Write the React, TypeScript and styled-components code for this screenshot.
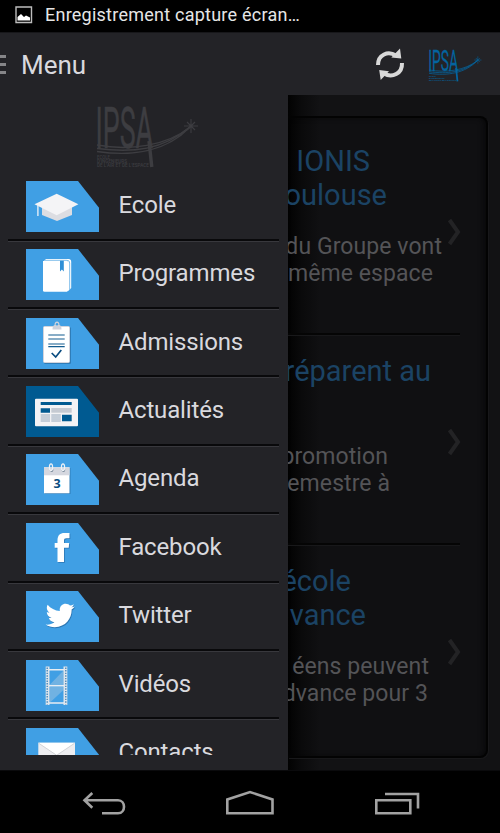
import React from 'react';
import styled, {createGlobalStyle} from 'styled-components';
import {FaTwitter} from 'react-icons/fa';

const colors = {
  panel: '#232327',
  text: '#d9d9de',
  blue: '#409fe4',
  blueDark: '#005a91',
  navy: '#0a4c80',
};

const GlobalStyle = createGlobalStyle`
  * {
    box-sizing: border-box;
  }
  body {
    margin: 0;
    background: #000;
    font-family: Roboto, 'Liberation Sans', sans-serif;
  }
  svg {
    display: block;
    flex: none;
    overflow: visible;
  }
`;

const Screen = styled.div`
  width: 500px;
  height: 833px;
  display: flex;
  flex-direction: column;
  overflow: hidden;
  background: #000;
`;

const StatusBar = styled.div`
  height: 32px;
  flex: none;
  display: flex;
  align-items: center;
  gap: 12px;
  padding: 0 0 2px 15px;
  color: #e6e6e6;
  font-size: 18px;
  line-height: 22px;
  letter-spacing: 0.24px;
  white-space: nowrap;
`;

const ActionBar = styled.header`
  height: 63px;
  flex: none;
  display: flex;
  align-items: center;
  padding-right: 18px;
  background: ${colors.panel};
  border-top: 1px solid #17171a;
`;

const ActionTitle = styled.h1`
  flex: 1;
  margin: 2px 0 0 15px;
  color: ${colors.text};
  font-size: 26px;
  line-height: 30px;
  font-weight: 400;
`;

const HeaderLogo = styled.div`
  margin-left: 24px;
  padding-top: 3px;
`;

const Body = styled.div`
  flex: 1;
  min-height: 0;
  display: flex;
`;

const Drawer = styled.nav`
  width: 288px;
  flex: none;
  padding-bottom: 15px;
  background: ${colors.panel};
`;

const DrawerScroll = styled.div`
  height: 660px;
  overflow: hidden;
  padding: 0 9px 0 8px;
`;

const DrawerLogo = styled.div`
  height: 78.2px;
  padding: 10px 0 0 89px;
`;

const MenuRow = styled.div`
  height: 68.4px;
  display: flex;
  align-items: flex-start;
  padding: 7.6px 0 0 18px;
  border-bottom: 1px solid #38383d;
  box-shadow: inset 0 -2px 0 #09090b;
`;

const MenuLabel = styled.span`
  margin: 10px 0 0 18.5px;
  color: ${colors.text};
  font-size: 24px;
  line-height: 28px;
  letter-spacing: -0.15px;
  white-space: nowrap;
`;

const Content = styled.main`
  flex: 1;
  min-width: 0;
  overflow: hidden;
  padding: 21px 12px 12px 0;
  background: linear-gradient(90deg, #020202 0, #0b0b0c 14px, #121214 32px);
`;

const Card = styled.div`
  height: 100%;
  padding-top: 5px;
  border: 2px solid #030303;
  border-left: 0;
  border-radius: 0 8px 8px 0;
  background: linear-gradient(90deg, #020202 0, #0a0a0b 14px, #101012 32px);
  box-shadow: inset -3px 0 6px -2px #060607, 1px 1px 0 #18181a;
`;

const Article = styled.article`
  width: 172px;
  height: 210px;
  display: flex;
  padding-top: 21px;

  & + & {
    border-top: 2px solid #050505;
    box-shadow: inset 0 1px 0 #18181a;
    padding-top: 19px;
  }
`;

const ArticleText = styled.div`
  width: 157px;
  flex: none;
`;

const Title = styled.h2`
  height: 68px;
  margin: 0 0 21px;
  color: #1b4364;
  font-size: 29px;
  line-height: 34px;
  font-weight: 400;
`;

const Excerpt = styled.p`
  margin: 0;
  color: #545457;
  font-size: 23px;
  line-height: 27.4px;
  letter-spacing: 0.08px;
`;

// each line runs on under the drawer, so it is anchored on its right end
const Line = styled.span<{$end: number}>`
  display: flex;
  justify-content: flex-end;
  padding-right: ${({$end}) => $end}px;
  white-space: pre;
`;

const Chevron = styled.svg`
  margin: 73px 0 0 2px;
`;

const NavBar = styled.footer`
  height: 63px;
  flex: none;
  display: grid;
  grid-template-columns: repeat(3, 1fr);
  justify-items: center;
  padding: 18px 30px 0 31px;
  background: #000;
  border-top: 1px solid #0a0a0c;
`;

type LogoProps = {width: number; height: number; color: string};

const IpsaLogo = ({width, height, color}: LogoProps) => (
  <svg width={width} height={height} viewBox="0 0 102 63" fill={color}>
    <text
      x="-1.500"
      y="42.500"
      fontFamily="Roboto"
      fontSize="58"
      textLength="57.500"
      lengthAdjust="spacingAndGlyphs"
      stroke={color}
      strokeWidth=".5"
    >
      IPSA
    </text>
    <g fill="none" stroke={color}>
      <path d="M52 36 54.800 62" strokeWidth="3.400" />
      <path d="M0 40C32 46 70 41 93 22" strokeWidth="1.400" />
      <path d="M0 43.500C36 48 66 45 93 22" strokeWidth="1.400" />
      <path d="M0 46.500C36 52 70 46 93 22" strokeWidth="1.400" />
      <path d="M87 21h14M94 14v14M90 17l8 8M98 17l-8 8" strokeWidth="1.100" />
    </g>
    <g fontFamily="Roboto" fontSize="4.600" fontWeight="500">
      <text x="0" y="53.600" textLength="13" lengthAdjust="spacingAndGlyphs">ECOLE</text>
      <text x="0" y="57.800" textLength="30" lengthAdjust="spacingAndGlyphs">D'INGENIEURS</text>
      <text x="0" y="62" textLength="52" lengthAdjust="spacingAndGlyphs">DE L'AIR ET DE L'ESPACE</text>
    </g>
  </svg>
);

const PictureIcon = () => (
  <svg width="18" height="18" viewBox="0 0 18 18">
    <path d="M1 1h15.500v15.500H1z" fill="none" stroke="#bdbdbd" strokeWidth="1.400" />
    <path d="M2.500 14.500V11l3.500-3 3 3 2-1.500 4 2v3z" fill="#fff" />
  </svg>
);

const DrawerIcon = () => (
  <svg width="6" height="20" viewBox="0 0 6 20" fill="#858588">
    <path d="M0 1h6v3H0zM0 9h6v3H0zM0 17h6v3H0z" />
  </svg>
);

const RefreshIcon = () => (
  <svg width="30" height="34" viewBox="0 0 30 34">
    <g fill="none" stroke="#d8d8d8" strokeWidth="4">
      <path d="M3 18C3 7.500 13 3.500 21 8.500" />
      <path d="M27 16C27.500 26.500 17 31.500 9 26.500" />
    </g>
    <path d="M25 1.500 26.300 11.500 16.300 10.500zM4.200 23l9.800 1.200L5.700 33z" fill="#d8d8d8" />
  </svg>
);

const SchoolArt = () => (
  <>
    <path d="M16 25h30v9L31 40 16 34z" fill="#dcdde2" />
    <path d="M8.500 23.300 30.700 12.700l21.700 10.600-21.700 11z" fill="#f4f4f6" />
    <path d="M11.900 24v11" stroke="#e4eef8" strokeWidth="1.400" />
  </>
);

const BookArt = () => (
  <>
    <path d="M20 10h22.500q2.700 0 2.700 2.700V39l-3 3V12H18z" fill="#fff" />
    <path d="M18.500 11.300h22.500q2.700 0 2.700 2.700v27" fill="none" stroke="#6fb5e8" strokeWidth=".9" />
    <path d="M17 11.900h24q2 0 2 2v26.800l-2 2H18.500q-1.500 0-1.500-1.500z" fill="#fff" />
    <path d="M34 11.700h3.800v10.800l-1.900-2-1.900 2z" fill="#2f8fd6" />
  </>
);

const ClipboardArt = () => (
  <>
    <rect x="18" y="9" width="27" height="37" rx="1.500" fill="#2f7db8" />
    <rect x="17.500" y="8.500" width="26" height="36" rx="1" fill="#fff" stroke="#d3d4dc" />
    <path d="M26.500 11.500q0-4 2-4.500 0-3.500 2.500-3.500T33.500 7q2 .5 2 4.500z" fill="#cfd2dc" />
    <circle cx="31" cy="6.300" r="1.200" fill={colors.blue} />
    <path d="M22.300 17h16.400M22.300 21h16.400M22.300 26h16.400M22.300 28.600h16.400" stroke="#135c90" strokeWidth="1.100" />
    <path d="m25.700 35 4 4 5.600-7" fill="none" stroke={colors.navy} strokeWidth="1.700" />
  </>
);

const NewsArt = () => (
  <>
    <rect x="9" y="12.700" width="43" height="27.600" rx="1" fill="#f3f3f5" />
    <path d="M14.700 16h31v3h-31zM14.700 22.300H24v4.400h-9.300zM36 28.700h9.700v6.600H36z" fill={colors.blueDark} />
    <path d="M25.300 22h20.400v4.700H25.300z" fill="#c5cad2" />
    <path
      d="M14.700 29H24M14.700 31H24M14.700 33H24M14.700 35H24M25.300 29h9.500M25.300 31h9.500M25.300 33h9.500M25.300 35h9.500"
      stroke="#7f96ac"
      strokeWidth=".8"
    />
  </>
);

const CalendarArt = () => (
  <>
    <path d="M18.500 14h26v26h-26z" fill="#2f7db8" />
    <path d="M18 13.300h25.500v26H18z" fill="#fff" />
    <path d="M18 13.300h25.500v8H18z" fill="#d5d7df" />
    <g fill="none" strokeWidth="1.200">
      <path d="M24 16q2 3 3-.5M35.800 16q2 3 3-.5" stroke="#6f8092" />
      <ellipse cx="25" cy="13.300" rx="1.600" ry="3.400" stroke="#eef1f6" />
      <ellipse cx="37" cy="13.300" rx="1.600" ry="3.400" stroke="#eef1f6" />
    </g>
    <text x="31" y="33.700" textAnchor="middle" fontFamily="Open Sans" fontSize="12.500" fontWeight="700" fill={colors.navy}>
      3
    </text>
  </>
);

const FACEBOOK_MARK =
  'M31.500 39V24.800h-2.800V20h2.800v-2.500c0-5.200 2.500-7.500 7-7.500H43.500v5.200H40.500c-2 0-2.500.8-2.500 2.500V20h5.200l-.5 4.800H38V39z';

const FacebookArt = () => (
  <>
    <path d={FACEBOOK_MARK} fill="#2b76b3" transform="translate(.8 .8)" />
    <path d={FACEBOOK_MARK} fill="#fff" />
  </>
);

const TwitterArt = () => (
  <>
    <FaTwitter x="20.300" y="11" size={29} color="#2b76b3" />
    <FaTwitter x="19.600" y="10" size={29} color="#fff" />
  </>
);

const FilmArt = () => (
  <>
    <path d="M37.500 10.500V25h-14zM37.500 27v3L24 42.500V27z" fill="#71b2e2" />
    <path d="M19.700 6.500h3.800v38.500h-3.800zM37.500 6.500h3.800v38.500h-3.800z" fill="#dfe6ec" />
    <path d="M21.200 7.500v37M39.800 7.500v37" stroke="#3f80b5" strokeWidth="1.300" strokeDasharray="1.400 1.200" />
    <path d="M23 9.800h15M23 25.800h15M23 43h15" stroke="#e7edf2" strokeWidth="1.500" />
  </>
);

const MailArt = () => (
  <>
    <path d="M12.300 14.700H49V41H12.300z" fill="#ededf0" />
    <path d="M12.300 14.700H49L30.700 27z" fill="#fff" />
    <path d="m12.800 15.300 17.900 12L48.500 15.300" fill="none" stroke="#cfd0d4" strokeWidth=".9" />
  </>
);

const MENU = [
  {label: 'Ecole', Art: SchoolArt},
  {label: 'Programmes', Art: BookArt},
  {label: 'Admissions', Art: ClipboardArt},
  {label: 'Actualités', Art: NewsArt, active: true},
  {label: 'Agenda', Art: CalendarArt},
  {label: 'Facebook', Art: FacebookArt},
  {label: 'Twitter', Art: TwitterArt},
  {label: 'Vidéos', Art: FilmArt},
  {label: 'Contacts', Art: MailArt},
];

const ARTICLES = [
  {
    title: [['IONIS', 75], ['oulouse', 58]],
    excerpt: [['du Groupe vont', 3], ['même espace', 12]],
  },
  {
    title: [['réparent au', 14]],
    excerpt: [['promotion', 57], ['emestre à', 55]],
  },
  {
    title: [['école', 94], ['vance', 79]],
    excerpt: [['éens peuvent', 16], ['dvance pour 3', 17]],
  },
] as {title: [string, number][]; excerpt: [string, number][]}[];

const renderLines = (lines: [string, number][]) =>
  lines.map(([text, end]) => (
    <Line key={text} $end={end}>
      {text}
    </Line>
  ));

const App = () => (
  <>
    <GlobalStyle />
    <Screen>
      <StatusBar>
        <PictureIcon />
        Enregistrement capture écran…
      </StatusBar>
      <ActionBar>
        <DrawerIcon />
        <ActionTitle>Menu</ActionTitle>
        <RefreshIcon />
        <HeaderLogo>
          <IpsaLogo width={53} height={33} color="#04649f" />
        </HeaderLogo>
      </ActionBar>
      <Body>
        <Drawer>
          <DrawerScroll>
            <DrawerLogo>
              <IpsaLogo width={102} height={63} color="#3d3d41" />
            </DrawerLogo>
            {MENU.map(({label, Art, active}) => (
              <MenuRow key={label}>
                <svg width="74" height="52" viewBox="0 0 74 52">
                  <path d="M0 0h52l21 26.700V51H0z" fill={active ? colors.blueDark : colors.blue} />
                  <Art />
                </svg>
                <MenuLabel>{label}</MenuLabel>
              </MenuRow>
            ))}
          </DrawerScroll>
        </Drawer>
        <Content>
          <Card>
            {ARTICLES.map(({title, excerpt}) => (
              <Article key={title[0][0]}>
                <ArticleText>
                  <Title>{renderLines(title)}</Title>
                  <Excerpt>{renderLines(excerpt)}</Excerpt>
                </ArticleText>
                <Chevron width="14" height="30" viewBox="0 0 14 30">
                  <path d="m2.500 3 8.500 12-8.500 12" fill="none" stroke="#232325" strokeWidth="4" />
                </Chevron>
              </Article>
            ))}
          </Card>
        </Content>
      </Body>
      <NavBar>
        <svg width="44" height="28" viewBox="0 0 44 28" fill="none" stroke="#a2a2a2" strokeWidth="2.600">
          <path d="M10.300 4 2.500 11.300l7.800 7.500M3 11.300h33c8 0 8 13 0 13H20" />
        </svg>
        <svg width="50" height="28" viewBox="0 0 50 28" fill="none" stroke="#a2a2a2" strokeWidth="2.600">
          <path d="M2.300 24.300V10.500L25 3l22.500 7.500v13.800z" />
        </svg>
        <svg width="46" height="28" viewBox="0 0 46 28" fill="none" stroke="#a2a2a2" strokeWidth="2.600">
          <path d="M2.300 11.300h34v13h-34zM11 5h33v14.500" />
        </svg>
      </NavBar>
    </Screen>
  </>
);

export default App;
